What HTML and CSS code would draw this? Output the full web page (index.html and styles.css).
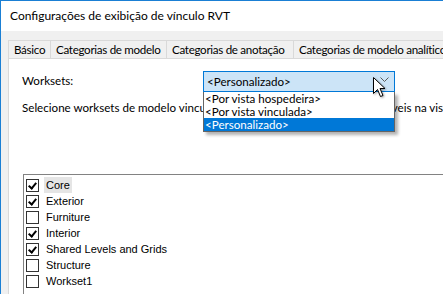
FILE: index.html
```html
<!DOCTYPE html>
<html lang="pt">
<head>
<meta charset="utf-8">
<link rel="stylesheet" href="styles.css">
</head>
<body>
<div class="window">
  <div class="titlebar">Configurações de exibição de vínculo RVT</div>
  <div class="client">
    <div class="tabs">
      <div class="tab tab-basico">Básico</div>
      <div class="tab tab-modelo">Categorias de modelo</div>
      <div class="tab tab-anot">Categorias de anotação</div>
      <div class="tab tab-anal">Categorias de modelo analítico</div>
    </div>
    <div class="panel">
      <div class="row-worksets">
        <span class="label">Worksets:</span>
        <div class="combo-wrap">
          <div class="combo">
            <span class="combo-text">&lt;Personalizado&gt;</span>
            <svg class="chev" width="9" height="5" viewBox="0 0 9 5"><path d="M0.5 0.5 L4.5 4.5 L8.5 0.5" fill="none" stroke="#5a5a5a" stroke-width="1"/></svg>
          </div>
          <ul class="droplist">
            <li>&lt;Por vista hospedeira&gt;</li>
            <li>&lt;Por vista vinculada&gt;</li>
            <li class="sel">&lt;Personalizado&gt;</li>
          </ul>
          <svg class="cursor" width="14" height="22" viewBox="0 0 14 22"><path d="M1.5 1.5 L1.5 17.5 L5.5 13.5 L8.5 20.5 L11 19.5 L8 12.5 L13 12.5 Z" fill="#fff" stroke="#000" stroke-width="1" stroke-linejoin="miter"/></svg>
        </div>
      </div>
      <div class="desc">Selecione worksets de modelo vinculados que serão mostrados como visíveis na vista</div>
      <div class="listbox">
        <div class="item"><span class="cb on"></span><span class="txt focus">Core</span></div>
        <div class="item"><span class="cb on"></span><span class="txt">Exterior</span></div>
        <div class="item"><span class="cb"></span><span class="txt">Furniture</span></div>
        <div class="item"><span class="cb on"></span><span class="txt">Interior</span></div>
        <div class="item"><span class="cb on"></span><span class="txt">Shared Levels and Grids</span></div>
        <div class="item"><span class="cb"></span><span class="txt">Structure</span></div>
        <div class="item"><span class="cb"></span><span class="txt">Workset1</span></div>
      </div>
    </div>
  </div>
</div>
</body>
</html>
```
FILE: styles.css
```css
* { box-sizing: border-box; }
html, body { margin: 0; padding: 0; }
body {
  width: 443px;
  height: 294px;
  overflow: hidden;
  background: #fff;
  font-family: "Lato", sans-serif;
  font-size: 11.6px;
  color: #000;
}
.window {
  height: 294px;
  border-top: 1px solid #1a7fd4;
  border-left: 1px solid #1a7fd4;
  display: flex;
  flex-direction: column;
  overflow: hidden;
}
.titlebar {
  height: 30px;
  background: #fff;
  padding-left: 9px;
  display: flex;
  align-items: center;
  font-size: 12px;
  padding-bottom: 2px;
  flex: none;
}
.client {
  flex: 1;
  background: #f0f0f0;
  padding: 9px 0 0 7px;
  display: flex;
  flex-direction: column;
  overflow: hidden;
}
.tabs {
  display: flex;
  height: 18px;
  white-space: nowrap;
  flex: none;
}
.tab {
  border: 1px solid #d9d9d9;
  border-bottom: none;
  border-right: none;
  padding: 0 0 0 5px;
  line-height: 17px;
  background: #f0f0f0;
  flex: none;
  overflow: hidden;
  letter-spacing: -0.3px;
}
.tab-basico { width: 42px; }
.tab-modelo { width: 116px; }
.tab-anot { width: 127px; }
.tab-anal { width: 160px; }
.panel {
  flex: 1;
  background: #fff;
  border-top: 1px solid #d9d9d9;
  border-left: 1px solid #d9d9d9;
  padding: 12px 0 0 13px;
  display: flex;
  flex-direction: column;
  white-space: nowrap;
}
.row-worksets {
  display: flex;
  align-items: flex-start;
  height: 21px;
  flex: none;
}
.label {
  width: 181px;
  line-height: 17px;
  padding-top: 1px;
  flex: none;
}
.combo-wrap {
  position: relative;
  z-index: 2;
  flex: none;
}
.combo {
  width: 192px;
  height: 21px;
  background: #cce4f7;
  border: 1px solid #0078d7;
  display: flex;
  align-items: center;
  justify-content: space-between;
  padding: 0 5px 1px 3px;
}
.chev { margin-top: -3px; }
.droplist {
  position: absolute;
  left: 0;
  top: 21px;
  width: 192px;
  margin: 0;
  padding: 0;
  list-style: none;
  background: #fff;
  border: 1px solid #646464;
  border-top: none;
  box-shadow: 3px 3px 3px rgba(0,0,0,0.3);
}
.droplist li {
  height: 13px;
  line-height: 13px;
  padding-left: 1px;
}
.droplist li.sel {
  background: #0078d7;
  color: #fff;
}
.cursor {
  position: absolute;
  left: 169px;
  top: 5px;
  filter: drop-shadow(1px 1px 1px rgba(0,0,0,0.35));
}
.desc {
  margin-top: 7px;
  line-height: 17px;
  flex: none;
}
.listbox {
  margin-top: 58px;
  margin-left: 1px;
  flex: 1;
  border: 1px solid #828282;
  border-right: none;
  border-bottom: none;
  padding: 2px 0 0 2px;
  font-family: "Liberation Sans", sans-serif;
  font-size: 11px;
  color: #000;
}
.item {
  height: 16px;
  display: flex;
  align-items: center;
}
.cb {
  width: 13px;
  height: 13px;
  border: 1px solid #333;
  background: #fff;
  margin-right: 5px;
  position: relative;
  flex: none;
}
.cb.on::after {
  content: "";
  position: absolute;
  left: 3px;
  top: 1px;
  width: 3px;
  height: 6px;
  border: solid #000;
  border-width: 0 2px 2px 0;
  transform: rotate(40deg);
}
.txt {
  padding: 1px 2px;
  line-height: 14px;
}
.txt.focus { background: #e5e5e5; }
```
